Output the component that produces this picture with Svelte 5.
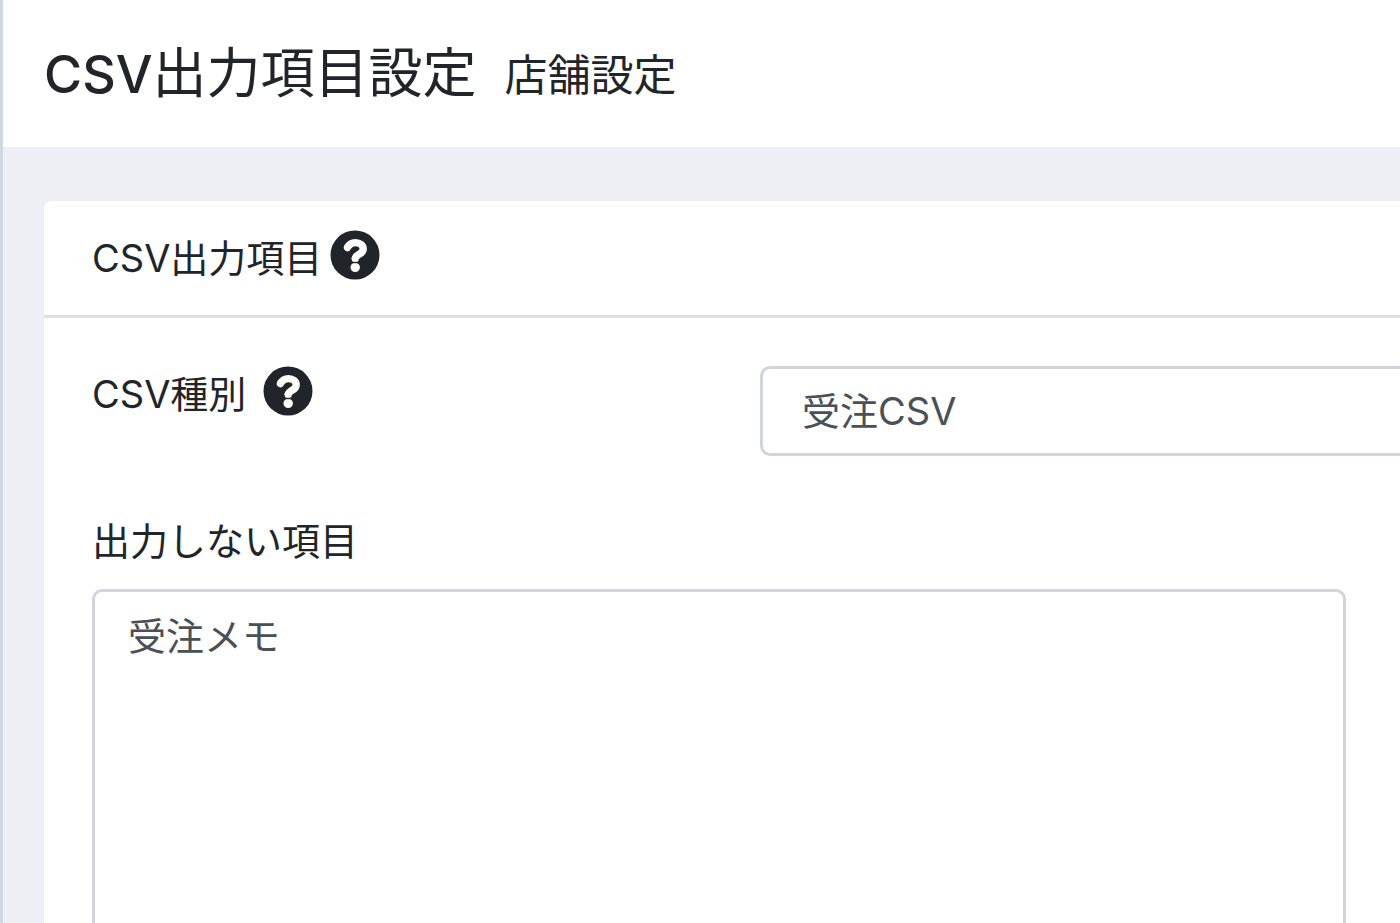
<script lang="ts">
	const csvTypes = ['受注CSV'];
	const hiddenItems = ['受注メモ'];

	let csvType = $state(csvTypes[0]);
	let selectedItems = $state<string[]>([]);
</script>

<svelte:head>
	<title>CSV出力項目設定</title>
</svelte:head>

{#snippet helpIcon()}
	<svg class="help" viewBox="0 0 50 50" aria-hidden="true">
		<circle cx="25" cy="25" r="24.5" fill="currentColor" />
		<path
			d="M17.4 17.6C19.2 14.2 21.8 12.6 25.4 12.6C29.8 12.6 33.2 15.2 33.2 18.9C33.2 24.6 25.2 24.2 25.2 29"
			fill="none"
			stroke="#fff"
			stroke-width="7.4"
			stroke-linejoin="round"
		/>
		<path
			d="M17.4 17.6L17.9 16.8M25.2 28.6V28.8"
			fill="none"
			stroke="#fff"
			stroke-width="7.2"
			stroke-linecap="round"
		/>
		<circle cx="25.2" cy="37.4" r="4.7" fill="#fff" />
		<path d="M20 32.5H31" stroke="currentColor" stroke-width="1.4" />
	</svg>
{/snippet}

<div class="page">
	<header>
		<h1><span class="latin">CSV</span>出力項目設定</h1>
		<span class="subtitle">店舗設定</span>
	</header>

	<main>
		<section class="card">
			<div class="card-header">
				<h2>CSV出力項目</h2>
				{@render helpIcon()}
			</div>
			<div class="card-body">
				<div class="row">
					<div class="row-label">
						<label for="csv-type">CSV種別</label>
						{@render helpIcon()}
					</div>
					<select id="csv-type" class="type" bind:value={csvType}>
						{#each csvTypes as type}
							<option>{type}</option>
						{/each}
					</select>
				</div>

				<div class="items">
					<label for="hidden-items">出力しない項目</label>
					<select id="hidden-items" class="list" multiple bind:value={selectedItems}>
						{#each hiddenItems as item}
							<option>{item}</option>
						{/each}
					</select>
				</div>
			</div>
		</section>
	</main>
</div>

<style>
	:global(body) {
		margin: 0;
		background: #eeeff4;
	}

	.page {
		box-sizing: border-box;
		display: flex;
		flex-direction: column;
		height: 100vh;
		overflow: hidden;
		border-left: 3px solid #d3d7df;
		color: #212529;
		font-family: Inter, 'Noto Sans CJK JP', sans-serif;
		font-size: 38px;
		line-height: 56px;
	}

	header {
		display: flex;
		align-items: center;
		gap: 28px;
		padding: 35px 41px 33px;
		background: #fff;
	}

	h1,
	h2 {
		margin: 0;
		font-weight: 400;
	}

	h1 {
		font-size: 54px;
		line-height: 78px;
	}

	h2 {
		font-size: 38px;
	}

	.latin {
		font-size: 52px;
		font-weight: 500;
	}

	.subtitle {
		font-size: 43px;
		line-height: 60px;
	}

	main {
		flex: 1;
		display: flex;
		padding: 54px 0 0 41px;
	}

	.card {
		flex: 1;
		display: flex;
		flex-direction: column;
		background: #fff;
		border-radius: 8px 0 0 0;
	}

	.card-header {
		display: flex;
		align-items: flex-start;
		gap: 8px;
		padding: 29px 48px;
		border-bottom: 3px solid #dfe0e2;
	}

	.card-body {
		flex: 1;
		display: flex;
		flex-direction: column;
		padding: 48px 54px 0 48px;
	}

	/* the row keeps going past the visible edge of the card */
	.row {
		display: grid;
		grid-template-columns: 1fr 1fr;
		align-items: start;
		margin-right: -82px;
	}

	.row-label {
		display: flex;
		align-items: flex-start;
		gap: 17px;
	}

	.help {
		width: 50px;
		height: 50px;
	}

	select {
		box-sizing: border-box;
		width: 100%;
		margin: 0;
		border: 3px solid #d1d5db;
		border-radius: 10px;
		appearance: none;
		background: #fff;
		color: #495057;
		font: inherit;
	}

	.type {
		height: 90px;
		padding: 0 39px;
	}

	.items {
		flex: 1;
		display: flex;
		flex-direction: column;
		gap: 20px;
		margin-top: 57px;
	}

	.list {
		flex: 1;
		border-bottom: 0;
		border-radius: 10px 10px 0 0;
		padding: 14px 33px;
		overflow: hidden;
	}

	.list option {
		padding: 0;
		min-height: 56px;
	}
</style>
